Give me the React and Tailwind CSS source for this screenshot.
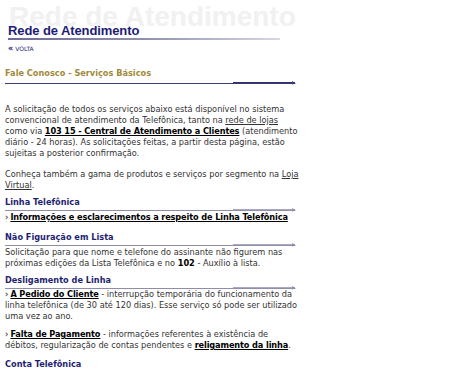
import React from "react";

function Rule({ dark }) {
  const main = dark ? "#3b3b78" : "#8e8eaa";
  const seg = dark ? "#2e2e6a" : "#a9a9c2";
  return (
    <svg width="292" height="5" viewBox="0 0 292 5" className="block">
      <rect x="0" y="3" width="290" height="1" fill={main} />
      <rect x="228" y="2" width="62" height="1" fill={seg} />
      <polygon points="287,1 291,3.5 287,4.5" fill={main} />
    </svg>
  );
}

function Heading({ children }) {
  return (
    <div className="text-[#1f1f72] font-bold leading-[9px]">{children}</div>
  );
}

const B = ({ children }) => (
  <span className="font-bold text-black underline tracking-[-0.12px]">
    {children}
  </span>
);
const U = ({ children }) => <span className="underline">{children}</span>;
const Arrow = () => (
  <span className="text-[#555] font-bold mr-[2px]">›</span>
);

export default function App() {
  return (
    <div
      className="w-[467px] h-[369px] bg-white overflow-hidden relative"
      style={{ fontFamily: '"DejaVu Sans", Verdana, sans-serif' }}
    >
      {/* header */}
      <div className="relative h-[56px]">
        <div
          className="absolute left-[9px] top-[3px] text-[28px] font-bold text-[#f1f1f1] leading-none whitespace-nowrap"
          style={{ fontFamily: '"Liberation Sans", Arial, sans-serif' }}
        >
          Rede de Atendimento
        </div>
        <div className="absolute left-[8px] top-[24px]">
          <div
            className="text-[13px] font-bold text-[#1c1c78] leading-[14px] whitespace-nowrap tracking-[-0.1px]"
            style={{ fontFamily: '"Liberation Sans", Arial, sans-serif' }}
          >
            Rede de Atendimento
          </div>
          <div className="h-[2px] w-[272px] bg-gradient-to-r from-[#6c6c94] via-[#9090ac] to-[#d8d8e4]" />
          <div className="mt-[5px] flex items-center gap-[3px] text-[6px] text-[#1c1c78] leading-none">
            <span className="font-bold text-[8px] tracking-[-1px]">«</span>
            <span>VOLTA</span>
          </div>
        </div>
      </div>

      <div className="pl-[5px] w-[302px] text-[8.2px] leading-[11px] text-[#333]">
        <div className="pt-[12px] text-[#a08a3a] font-bold">
          Fale Conosco - Serviços Básicos
        </div>
        <div className="mt-[1px]">
          <Rule dark />
        </div>

        <p className="mt-[19px]">
          A solicitação de todos os serviços abaixo está disponível no sistema
          convencional de atendimento da Telefônica, tanto na{" "}
          <U>rede de lojas</U> como via{" "}
          <B>103 15 - Central de Atendimento a Clientes</B> (atendimento
          diário - 24 horas). As solicitações feitas, a partir desta página,
          estão sujeitas a posterior confirmação.
        </p>
        <p className="mt-[10px]">
          Conheça também a gama de produtos e serviços por segmento na{" "}
          <U>Loja Virtual</U>.
        </p>

        <div className="mt-[7px]">
          <Heading>Linha Telefônica</Heading>
          <Rule />
          <div>
            <Arrow />
            <B>Informações e esclarecimentos a respeito de Linha Telefônica</B>
          </div>
        </div>

        <div className="mt-[10px]">
          <Heading>Não Figuração em Lista</Heading>
          <Rule />
          <p>
            Solicitação para que nome e telefone do assinante não figurem nas
            próximas edições da Lista Telefônica e no{" "}
            <span className="font-bold text-black">102</span> - Auxílio à
            lista.
          </p>
        </div>

        <div className="mt-[7px]">
          <Heading>Desligamento de Linha</Heading>
          <div className="-mb-[1px]">
            <Rule />
          </div>
          <p>
            <Arrow />
            <B>A Pedido do Cliente</B> - interrupção temporária do
            funcionamento da linha telefônica (de 30 até 120 dias). Esse
            serviço só pode ser utilizado uma vez ao ano.
          </p>
          <p className="mt-[7px]">
            <Arrow />
            <B>Falta de Pagamento</B> - informações referentes à existência de
            débitos, regularização de contas pendentes e{" "}
            <B>religamento da linha</B>.
          </p>
        </div>

        <div className="mt-[9px]">
          <Heading>Conta Telefônica</Heading>
          <Rule />
        </div>
      </div>
    </div>
  );
}
